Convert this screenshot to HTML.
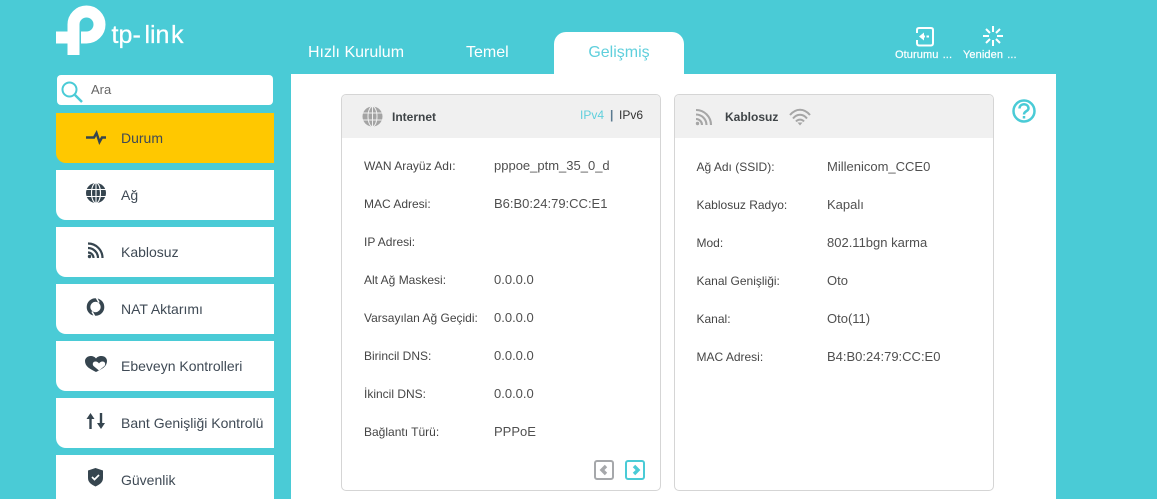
<!DOCTYPE html>
<html><head><meta charset="utf-8"><style>
*{box-sizing:border-box}
html,body{margin:0;padding:0;width:1157px;height:499px;overflow:hidden;background:#4acbd6;font-family:"Liberation Sans",sans-serif;color:#4a4f55}
#root{position:absolute;left:0;top:0;width:1157px;height:499px;overflow:hidden}
.a{position:absolute;white-space:nowrap}
#main{left:291px;top:74px;width:765px;height:425px;background:#fff}
.tab{font-size:16px;color:#fff;top:44px;line-height:18px}
#tabon{left:554px;top:32px;width:130px;height:42px;background:#fff;border-radius:12px 12px 0 0;color:#5fcfdc;font-size:16px;text-align:center;line-height:42px}
.item{left:56px;width:218px;height:50px;background:#fff;border-bottom-left-radius:10px;font-size:14px;line-height:50px;padding-left:65px;color:#3f4a55}
.item svg{position:absolute;left:28px;top:11px}
#search{left:57px;top:75px;width:216px;height:30px;background:#fff;border-radius:4px;font-size:13px;color:#666;line-height:29px;padding-left:34px}
.panel{top:94px;width:320px;height:397px;border:1px solid #d5d5d5;border-radius:5px;background:#fff;overflow:hidden}
.ph{position:absolute;left:0;top:0;width:100%;height:43px;background:#f0f0f0}
.l{font-size:12px;color:#454545;line-height:14px}
.v{font-size:13px;color:#505050;line-height:14px}
.t{font-size:12px;font-weight:bold;color:#3f4447;line-height:14px}
.top{font-size:11px;color:#fff;top:49px;line-height:12px;word-spacing:1px;letter-spacing:.1px;-webkit-text-stroke:.2px #fff}
</style></head><body><div id="root">
<svg class="a" style="left:56px;top:0" width="52" height="56" viewBox="56 0 52 56"><path d="M73.500 55V24.500A13 13 0 0 1 99.500 24.500A13 13 0 0 1 86.500 37.500H81" fill="none" stroke="#fff" stroke-width="12"/><path d="M56 31.500H70V43.500H56Z" fill="#fff"/></svg>
<svg class="a" style="left:110px;top:15px" width="80" height="36"><text x="1.500 8.500 22.500 34.500 40 45.500 61" y="28" font-family="Liberation Sans" font-size="25" fill="#fff" stroke="#fff" stroke-width=".3">tp-link</text></svg>
<div class="a tab" style="left:308px">Hızlı Kurulum</div>
<div class="a tab" style="left:466px">Temel</div>
<div class="a" id="tabon">Gelişmiş</div>
<svg class="a" style="left:915px;top:26px" width="20" height="21" fill="none" stroke="#fff" stroke-width="2"><path d="M2 7V4Q2 2 4 2H16Q18 2 18 4V17Q18 19.500 16 19.500H4Q2 19.500 2 17V14"/><path d="M8 10.500H10M11.500 10.500H14"/><path fill="#fff" stroke="none" d="M4 10.500L9 6.500V14.500Z"/></svg>
<svg class="a" style="left:982px;top:25px" width="22" height="22" stroke="#fff" stroke-width="2"><path d="M11 1V7M11 15V21M1 11H7M15 11H21M4 4L8 8M14 14L18 18M18 4L14 8M8 14L4 18"/></svg>
<div class="a top" style="left:895px">Oturumu ...</div>
<div class="a top" style="left:963px">Yeniden ...</div>
<div class="a" id="main"></div>
<div class="a" id="search">Ara<svg class="a" style="left:4px;top:4px" width="24" height="24" fill="none" stroke="#4acbd6"><circle cx="8.500" cy="10.500" r="7" stroke-width="2"/><path d="M14 16L21 23" stroke-width="2.500"/></svg></div>
<div class="a item" style="top:113px;background:#ffc800"><svg width="24" height="28" fill="none" stroke="#36454f" stroke-width="2.400"><path d="M2 13.500H10L12.500 9L15.500 18L18 13.500H22"/></svg>Durum</div>
<div class="a item" style="top:170px"><svg width="24" height="28"><circle cx="12" cy="12" r="10" fill="#36454f"/><g fill="none" stroke="#fff" stroke-width="1.100"><ellipse cx="12" cy="12" rx="4.500" ry="10"/><path d="M2 8.500H22M2 15.500H22M12 2V22"/></g></svg>Ağ</div>
<div class="a item" style="top:227px"><svg width="24" height="28" fill="none" stroke="#36454f" stroke-width="2.200"><path d="M4 5.500A14.500 14.500 0 0 1 18.500 20M4 10A10 10 0 0 1 14 20M4 14.500A5.500 5.500 0 0 1 9.500 20"/><circle cx="5.500" cy="18.500" r="1.700" fill="#36454f" stroke="none"/></svg>Kablosuz</div>
<div class="a item" style="top:284px"><svg width="24" height="28" fill="none"><circle cx="11.500" cy="12" r="7" stroke="#36454f" stroke-width="3.600"/><path d="M12 2L15 7.500M11 22L8 16.500" stroke="#fff" stroke-width="1.500"/></svg>NAT Aktarımı</div>
<div class="a item" style="top:341px"><svg width="24" height="28"><path fill="#36454f" d="M12 20C6 17 1 14.500 1 9C1 6 4 4 6.500 4C9 4 11 5 12 6.500C13 5 15 4 17.500 4C20.500 4 23 6 23 9C23 14.500 18 17 12 20Z"/><path fill="#fff" d="M15 18.500L9.500 14C8 12 9 9.500 11.500 9.500C13 9.500 14.500 10.500 15 11.500C15.500 10.500 17 9.500 18.500 9.500C21 9.500 22 12 20.500 14Z"/></svg>Ebeveyn Kontrolleri</div>
<div class="a item" style="top:398px"><svg width="24" height="28" fill="#36454f"><path d="M6.500 4L10.500 10H7.700V20H5.300V10H2.500ZM17 20L13 14H15.800V4H18.200V14H21Z"/></svg>Bant Genişliği Kontrolü</div>
<div class="a item" style="top:455px;height:44px;border-radius:0"><svg width="24" height="28"><path fill="#36454f" d="M11.500 2L19 4.500V12C19 16.500 15.500 18.500 11.500 20.500C7.500 18.500 4 16.500 4 12V4.500Z"/><path fill="none" stroke="#fff" stroke-width="1.700" d="M8 11L10.500 13.500L15 9"/></svg>Güvenlik</div>
<div class="a panel" style="left:341px"><div class="ph"></div>
<svg class="a" style="left:20px;top:11px" width="21" height="21"><circle cx="10.500" cy="10.500" r="10" fill="#a4a4a4"/><g fill="none" stroke="#f0f0f0" stroke-width="1"><ellipse cx="10.500" cy="10.500" rx="4.500" ry="10"/><path d="M1 7H20M1 14H20M10.500 1V20"/></g></svg>
<div class="a t" style="left:50px;top:15px">Internet</div>
<div class="a" style="left:238px;top:13px;font-size:12px;line-height:14px;color:#5fcfdc">IPv4</div>
<div class="a" style="left:268px;top:13px;font-size:12px;line-height:14px;color:#5a7a90;font-weight:bold">|</div>
<div class="a" style="left:277px;top:13px;font-size:12px;line-height:14px;color:#333">IPv6</div>
<div class="a l" style="left:22px;top:64px">WAN Arayüz Adı:</div><div class="a v" style="left:152px;top:64px">pppoe_ptm_35_0_d</div>
<div class="a l" style="left:22px;top:102px">MAC Adresi:</div><div class="a v" style="left:152px;top:102px">B6:B0:24:79:CC:E1</div>
<div class="a l" style="left:22px;top:140px">IP Adresi:</div>
<div class="a l" style="left:22px;top:178px">Alt Ağ Maskesi:</div><div class="a v" style="left:152px;top:178px">0.0.0.0</div>
<div class="a l" style="left:22px;top:216px">Varsayılan Ağ Geçidi:</div><div class="a v" style="left:152px;top:216px">0.0.0.0</div>
<div class="a l" style="left:22px;top:254px">Birincil DNS:</div><div class="a v" style="left:152px;top:254px">0.0.0.0</div>
<div class="a l" style="left:22px;top:292px">İkincil DNS:</div><div class="a v" style="left:152px;top:292px">0.0.0.0</div>
<div class="a l" style="left:22px;top:330px">Bağlantı Türü:</div><div class="a v" style="left:152px;top:330px">PPPoE</div>
<svg class="a" style="left:252px;top:365px" width="20" height="20" fill="none" stroke="#a6a8ab"><rect x="1" y="1" width="18" height="18" rx="2" stroke-width="2"/><path d="M12 6L8 10L12 14" stroke-width="3.400"/></svg>
<svg class="a" style="left:283px;top:365px" width="20" height="20" fill="none" stroke="#4acbd6"><rect x="1" y="1" width="18" height="18" rx="2" stroke-width="2"/><path d="M9 6L13 10L9 14" stroke-width="3.400"/></svg>
</div>
<div class="a panel" style="left:674px"><div class="ph"></div>
<svg class="a" style="left:20px;top:13px" width="18" height="18" fill="none" stroke="#a6a6a6" stroke-width="2.100"><path d="M1 2A15 15 0 0 1 16 17M1 6.500A10.500 10.500 0 0 1 11.500 17M1 11A6 6 0 0 1 7 17"/><circle cx="2.500" cy="15.500" r="1.700" fill="#a6a6a6" stroke="none"/></svg>
<svg class="a" style="left:114px;top:13px" width="22" height="18" fill="none" stroke="#a6a6a6" stroke-width="2"><path d="M1 7C7 0 15 0 21 7M4 10.500C8 5.500 14 5.500 18 10.500M7 13.500C9 11 13 11 15 13.500"/><path d="M8.500 14.500H13.500L11 17.500Z" fill="#a6a6a6" stroke="none"/></svg>
<div class="a t" style="left:50px;top:15px">Kablosuz</div>
<div class="a l" style="left:21.500px;top:65px">Ağ Adı (SSID):</div><div class="a v" style="left:152px;top:65px">Millenicom_CCE0</div>
<div class="a l" style="left:21.500px;top:103px">Kablosuz Radyo:</div><div class="a v" style="left:152px;top:103px">Kapalı</div>
<div class="a l" style="left:21.500px;top:141px">Mod:</div><div class="a v" style="left:152px;top:141px">802.11bgn karma</div>
<div class="a l" style="left:21.500px;top:179px">Kanal Genişliği:</div><div class="a v" style="left:152px;top:179px">Oto</div>
<div class="a l" style="left:21.500px;top:217px">Kanal:</div><div class="a v" style="left:152px;top:217px">Oto(11)</div>
<div class="a l" style="left:21.500px;top:255px">MAC Adresi:</div><div class="a v" style="left:152px;top:255px">B4:B0:24:79:CC:E0</div>
</div>
<svg class="a" style="left:1012px;top:99px" width="24" height="24" fill="none" stroke="#4acbd6" stroke-width="2.500"><circle cx="12" cy="12" r="10.500"/><path d="M7.500 9.500C7.500 3.800 16.500 3.800 16.500 9.500C16.500 12.300 12 12 12 15.500"/><path d="M12 17V19.500"/></svg>
</div></body></html>
